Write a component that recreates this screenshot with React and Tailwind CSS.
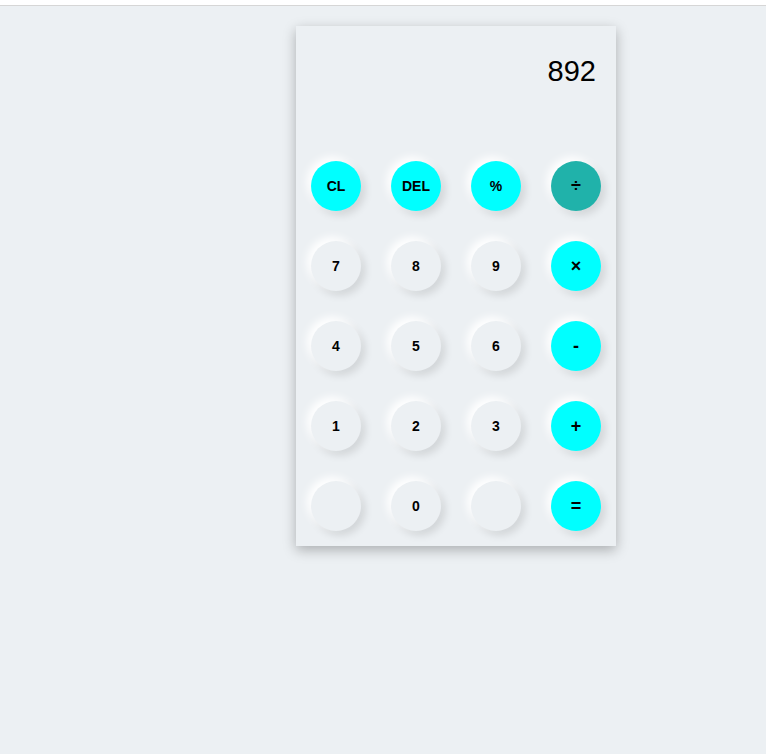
import React from "react";

const keys = [
  ["CL", "cyan"], ["DEL", "cyan"], ["%", "cyan"], ["÷", "teal", true],
  ["7"], ["8"], ["9"], ["×", "cyan", true],
  ["4"], ["5"], ["6"], ["-", "cyan", true],
  ["1"], ["2"], ["3"], ["+", "cyan", true],
  [""], ["0"], [""], ["=", "cyan", true],
];

function Key({ label, tone, op }) {
  const color =
    tone === "cyan" ? "bg-[#00ffff]" : tone === "teal" ? "bg-[#20b2aa]" : "bg-[#ecf0f3]";
  return (
    <button
      className={`${color} ${op ? "text-[18px]" : "text-[14px]"} w-[50px] h-[50px] rounded-full flex items-center justify-center font-bold text-black shadow-[-4px_-4px_8px_#ffffff,4px_4px_8px_rgba(0,0,0,0.12)]`}
    >
      {label}
    </button>
  );
}

export default function App() {
  return (
    <div className="min-h-screen bg-[#ecf0f3] font-['Liberation_Sans',Arial,sans-serif]">
      <div className="h-[6px] bg-white border-b border-[#d6d6d6]"></div>
      <div className="flex pl-[296px] pt-[20px]">
        <div className="w-[320px] bg-[#ecf0f3] shadow-[0_4px_12px_rgba(0,0,0,0.28)]">
          <div className="h-[135px] pt-[31px] pr-[20px] text-right text-[29px] leading-none text-black">
            892
          </div>
          <div className="grid grid-cols-4 gap-x-[30px] gap-y-[30px] px-[15px] pb-[15px]">
            {keys.map(([label, tone, op], i) => (
              <Key key={i} label={label} tone={tone} op={op} />
            ))}
          </div>
        </div>
      </div>
    </div>
  );
}
